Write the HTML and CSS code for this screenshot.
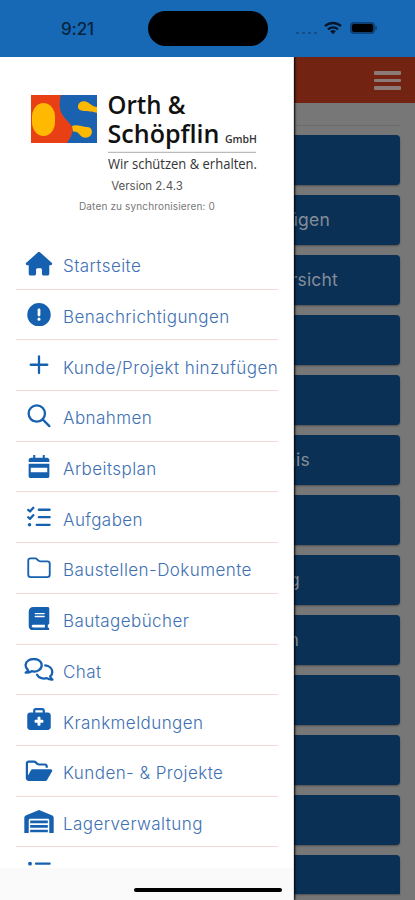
FILE: index.html
```
<!DOCTYPE html>
<html lang="de">

<head>
  <meta charset="UTF-8" />
  <meta name="viewport" content="width=device-width, initial-scale=1.0" />
  <title>Orth &amp; Schöpflin</title>
  <link rel="stylesheet" href="styles.css">
</head>

<body>
  <div class="statusbar">
    <span class="time">9:21</span>
    <div class="island"></div>
    <div class="status-icons">
      <div class="dots"><i></i><i></i><i></i><i></i></div>
      <svg class="wifi" viewBox="0 0 18 14">
        <g fill="none" stroke="#04162a" stroke-width="2.3">
          <path d="M1 5.2a11.6 11.6 0 0 1 16 0" />
          <path d="M4 8.3a7.3 7.3 0 0 1 10 0" />
        </g>
        <path fill="#04162a" d="M9 13.2l-2.8-2.9a4 4 0 0 1 5.6 0z" />
      </svg>
      <div class="battery"></div>
    </div>
  </div>

  <div class="screen">
    <div class="page">
      <header>
        <div class="burger"><i></i><i></i><i></i></div>
      </header>
      <main>
        <hr>
        <div class="tile"></div>
        <div class="tile t1">ügen</div>
        <div class="tile t2">rsicht</div>
        <div class="tile"></div>
        <div class="tile"></div>
        <div class="tile t3">nis</div>
        <div class="tile"></div>
        <div class="tile t4">g</div>
        <div class="tile t5">n</div>
        <div class="tile"></div>
        <div class="tile"></div>
        <div class="tile"></div>
        <div class="tile last"></div>
      </main>
    </div>

    <aside class="drawer">
      <div class="brand">
        <svg class="logo" viewBox="0 0 230 84" width="230" height="84">
          <rect x="0" y="3" width="66" height="48" fill="#e93f15" />
          <path fill="#1a62b0" d="M30 3H66V51H36C40 45 42 41 41.500 36C40 31 30 25 29 16C28.500 10 29 6 30 3z" />
          <rect x="1" y="11" width="23" height="33" rx="11.500" ry="14" fill="#ffb900" />
          <path fill="#ffb900" d="M47 15C47 10 52 8 56 10C60 12 62 15 66 15V21C60 18 47 21 47 15z" />
          <path fill="#ffb900" d="M41 34C46 32 51 35 56 35C61 35 62 40 60 43C57 47 51 46 49 43C47 40 44 39 42 39.500z" />
          <text class="name" x="76.500" y="22" textLength="78" lengthAdjust="spacingAndGlyphs">Orth &amp;</text>
          <text class="name" x="76.500" y="50.500" textLength="112" lengthAdjust="spacingAndGlyphs">Schöpflin</text>
          <text class="gmbh" x="194" y="50.500" textLength="32" lengthAdjust="spacingAndGlyphs">GmbH</text>
          <path d="M77 60.300H225" stroke="#aaa" />
          <text class="claim" x="77" y="76.500" textLength="149" lengthAdjust="spacingAndGlyphs">Wir schützen &amp; erhalten.</text>
        </svg>
        <div class="version">Version 2.4.3</div>
        <div class="sync">Daten zu synchronisieren: 0</div>
      </div>

      <ul class="menu">
        <li>
          <svg viewBox="0 0 576 512"><path d="M575.8 255.5c0 18-15 32.1-32 32.1h-32l.7 160.2c0 2.7-.2 5.400-.5 8.100V472c0 22.100-17.900 40-40 40H392c-22.100 0-40-17.900-40-40V384c0-17.700-14.300-32-32-32H256c-17.700 0-32 14.300-32 32v88c0 22.100-17.900 40-40 40H104c-22.100 0-40-17.900-40-40V287.600H32c-18 0-32-14-32-32.100c0-9 3-17 10-24L266.400 8c7-7 15-8 22-8s15 2 21 7L564.800 231.500c8 7 12 15 11 24z" /></svg>
          <span>Startseite</span>
        </li>
        <li>
          <svg viewBox="0 0 512 512"><path d="M256 512A256 256 0 1 0 256 0a256 256 0 1 0 0 512zm0-392c18 0 30 12 30 28V260c0 16-12 28-30 28s-30-12-30-28V148c0-16 12-28 30-28zM222 352a34 34 0 1 1 68 0 34 34 0 1 1 -68 0z" /></svg>
          <span>Benachrichtigungen</span>
        </li>
        <li>
          <svg class="line" viewBox="0 0 512 512"><path d="M256 75V437M75 256H437" /></svg>
          <span>Kunde/Projekt hinzufügen</span>
        </li>
        <li>
          <svg class="line" viewBox="0 0 512 512"><circle cx="208" cy="208" r="178" /><path d="M336 336L482 482" /></svg>
          <span>Abnahmen</span>
        </li>
        <li>
          <svg viewBox="0 0 512 512"><path fill-rule="evenodd" d="M130 0h44v58h164V0h44v58h50c28 0 50 22 50 50v44H30v-44c0-28 22-50 50-50h50zM30 190H482V456c0 30-20 50-50 50H80c-30 0-50-20-50-50zM76 280V376H436V280z" /></svg>
          <span>Arbeitsplan</span>
        </li>
        <li>
          <svg class="line" viewBox="0 0 512 512"><path d="M22 85L60 120L132 40M22 245L60 280L132 200M252 82H488M252 244H488M205 410H488" /><circle class="dot" cx="50" cy="410" r="38" /></svg>
          <span>Aufgaben</span>
        </li>
        <li>
          <svg class="line thin" viewBox="0 0 512 512"><path d="M75 52H175C195 52 205 60 216 73L240 98C250 110 262 116 280 116H437C468 116 490 137 490 168V408C490 438 468 460 437 460H75C44 460 22 438 22 408V104C22 74 44 52 75 52z" /></svg>
          <span>Baustellen-Dokumente</span>
        </li>
        <li>
          <svg viewBox="0 0 448 512"><path d="M96 0C43 0 0 43 0 96V416c0 53 43 96 96 96H416c17.700 0 32-14.300 32-32s-14.300-32-32-32V384c17.700 0 32-14.300 32-32V32c0-17.700-14.300-32-32-32H96zm0 384H352v64H96c-17.700 0-32-14.300-32-32s14.300-32 32-32zm32-240c0-8.800 7.200-16 16-16H336c8.800 0 16 7.200 16 16s-7.200 16-16 16H144c-8.800 0-16-7.200-16-16zm16 48H336c8.800 0 16 7.200 16 16s-7.200 16-16 16H144c-8.800 0-16-7.200-16-16s7.200-16 16-16z" /></svg>
          <span>Bautagebücher</span>
        </li>
        <li>
          <svg class="line" viewBox="0 0 640 512"><path d="M82 270C0 190 18 100 92 52C154 12 258 12 320 52C398 104 398 210 320 264C274 296 212 304 160 288C125 310 80 324 30 320C55 310 76 292 82 270z" /><path d="M455 162C530 170 610 220 610 306C610 350 592 378 564 402C570 432 588 450 614 470C568 476 526 462 490 438C420 460 315 444 278 366" /></svg>
          <span>Chat</span>
        </li>
        <li>
          <svg viewBox="0 0 512 512"><path fill-rule="evenodd" d="M184 48H328c4.400 0 8 3.600 8 8V96H176V56c0-4.400 3.600-8 8-8zm-56 8V96H64C28.700 96 0 124.700 0 160V416c0 35.300 28.700 64 64 64H448c35.300 0 64-28.700 64-64V160c0-35.300-28.700-64-64-64H384V56c0-30.900-25.100-56-56-56H184c-30.900 0-56 25.100-56 56zM224 208c0-8.800 7.200-16 16-16h32c8.800 0 16 7.200 16 16v48h48c8.800 0 16 7.200 16 16v32c0 8.800-7.200 16-16 16H288v48c0 8.800-7.200 16-16 16H240c-8.800 0-16-7.200-16-16V320H176c-8.800 0-16-7.200-16-16V272c0-8.800 7.200-16 16-16h48V208z" /></svg>
          <span>Krankmeldungen</span>
        </li>
        <li>
          <svg viewBox="0 0 576 512"><path d="M384 480h48c11.400 0 21.900-6 27.600-15.900l112-192c5.800-9.900 5.800-22.100 .1-32.100S555.500 224 544 224H144c-11.400 0-21.900 6-27.600 15.900L48 357.100V96c0-8.800 7.200-16 16-16H181.500c4.200 0 8.300 1.700 11.300 4.700l26.500 26.500c21 21 49.500 32.800 79.200 32.800H416c8.800 0 16 7.200 16 16v32h48V160c0-35.300-28.700-64-64-64H298.500c-17 0-33.300-6.700-45.300-18.700L226.700 50.700c-12-12-28.300-18.700-45.300-18.700H64C28.700 32 0 60.700 0 96V416c0 35.300 28.700 64 64 64H384z" /></svg>
          <span>Kunden- &amp; Projekte</span>
        </li>
        <li>
          <svg viewBox="0 0 640 512"><path d="M0 488V171.300c0-26.200 15.900-49.700 40.200-59.400L308.100 4.800c7.600-3.100 16.100-3.100 23.800 0L599.800 111.900c24.300 9.700 40.200 33.300 40.200 59.400V488c0 13.300-10.700 24-24 24H568c-13.300 0-24-10.700-24-24V224c0-17.700-14.300-32-32-32H128c-17.700 0-32 14.300-32 32V488c0 13.300-10.700 24-24 24H24c-13.300 0-24-10.700-24-24zM128 228H512V286H128zM128 328H512V386H128zM128 428H512V486H128z" /></svg>
          <span>Lagerverwaltung</span>
        </li>
        <li>
          <svg class="line" viewBox="0 0 512 512"><path d="M190 80H488M190 236H488M190 392H488" /><circle class="dot" cx="60" cy="80" r="42" /></svg>
        </li>
      </ul>
      <div class="drawer-foot"></div>
    </aside>
    <div class="home-indicator"></div>
  </div>
</body>

</html>
```
FILE: styles.css
```
* {
  box-sizing: border-box;
}

body {
  margin: 0;
  height: 900px;
  overflow: hidden;
  display: flex;
  flex-direction: column;
  font-family: Inter, "Liberation Sans", sans-serif;
  background: #777;
}

/* status bar */
.statusbar {
  position: relative;
  z-index: 2;
  height: 57px;
  flex: none;
  display: grid;
  grid-template-columns: 148px 120px 1fr;
  background: #1769b5;
}

.time {
  padding: 18px 0 0 61px;
  font-size: 17px;
  line-height: 22px;
  font-weight: 500;
  letter-spacing: -0.1px;
  color: #062440;
}

.island {
  height: 35px;
  margin-top: 11px;
  border-radius: 18px;
  background: #000;
}

.status-icons {
  display: flex;
  align-items: center;
  height: 56px;
  padding-left: 28px;
}

.dots {
  display: flex;
  gap: 3px;
  width: 28px;
  padding-top: 10px;
}

.dots i {
  width: 3px;
  height: 2px;
  background: #124f8b;
}

.wifi {
  width: 18px;
  height: 14px;
}

.battery {
  width: 25px;
  height: 12px;
  margin-left: 8px;
  border: 2px solid #0d4276;
  border-radius: 4px;
  background: #000;
}

.battery::after {
  content: "";
  display: block;
  width: 2px;
  height: 4px;
  margin: 2px 0 0 23px;
  background: #0f4a84;
}

/* dimmed page */
.screen {
  position: relative;
  flex: 1;
}

header {
  height: 46px;
  display: flex;
  justify-content: flex-end;
  background: #732312;
}

.burger {
  display: flex;
  flex-direction: column;
  gap: 4px;
  padding: 14px 14px 0 0;
}

.burger i {
  width: 27px;
  height: 3.500px;
  border-radius: 1px;
  background: #8c7a77;
}

main {
  padding: 22px 15px 0;
  display: flex;
  flex-direction: column;
  gap: 10px;
}

hr {
  width: 100%;
  height: 1px;
  margin: 0 0 -1px;
  border: 0;
  background: #6c6c6c;
}

.tile {
  height: 50px;
  border-radius: 4px;
  background: #0a3055;
  box-shadow: 0 1px 2px rgba(0, 0, 0, 0.35);
  color: #848d98;
  font-size: 17.500px;
  line-height: 50px;
  letter-spacing: 0.2px;
  text-align: right;
}

.t1 {
  padding-right: 70px;
}

.t2 {
  padding-right: 62px;
}

.t3 {
  padding-right: 90px;
}

.t4 {
  padding-right: 100px;
}

.t5 {
  padding-right: 101px;
}

.last {
  height: 39px;
  border-radius: 4px 4px 0 0;
}

/* drawer */
.drawer {
  position: absolute;
  top: 0;
  left: 0;
  width: 294px;
  height: 843px;
  display: flex;
  flex-direction: column;
  background: #fff;
  border-right: 1px solid #ddd;
  box-shadow: 1px 0 2px #000;
}

.brand {
  height: 182px;
  flex: none;
  padding-top: 35px;
}

.logo {
  display: block;
  margin-left: 31px;
  overflow: visible;
  font-family: "Open Sans", sans-serif;
}

.name {
  font-size: 25px;
  font-weight: 550;
  fill: #111;
}

.gmbh {
  font-size: 11px;
  font-weight: 600;
  fill: #333;
}

.claim {
  font-size: 14px;
  fill: #333;
}

.version {
  width: 294px;
  margin-top: 2px;
  font-size: 11.500px;
  line-height: 16px;
  text-align: center;
  color: #555;
}

.sync {
  width: 294px;
  margin-top: 5px;
  font-size: 10px;
  line-height: 14px;
  letter-spacing: 0.15px;
  text-align: center;
  color: #777;
}

.menu {
  flex: 1;
  min-height: 0;
  margin: 0;
  padding: 0 15px 0 16px;
  list-style: none;
  overflow: hidden;
}

.menu li {
  height: 50.700px;
  display: flex;
  align-items: center;
  padding-left: 8px;
  border-bottom: 1.500px solid #f3dad6;
  color: #3e70b4;
  font-size: 17px;
  font-weight: 300;
  letter-spacing: 0.43px;
  white-space: nowrap;
}

.menu span {
  margin-left: 9px;
  padding-top: 5px;
}

.menu svg {
  width: 30px;
  height: 23.500px;
  flex: none;
  fill: #1660b0;
}

.menu .line {
  fill: none;
  stroke: #1660b0;
  stroke-width: 50;
  stroke-linecap: round;
  stroke-linejoin: round;
}

.menu .thin {
  stroke-width: 40;
}

.menu .dot {
  fill: #1660b0;
  stroke: none;
}

.drawer-foot {
  height: 32px;
  flex: none;
  background: #fafafa;
}

.home-indicator {
  position: absolute;
  left: 134px;
  bottom: 8px;
  width: 148px;
  height: 4px;
  border-radius: 2px;
  background: #000;
}
```
